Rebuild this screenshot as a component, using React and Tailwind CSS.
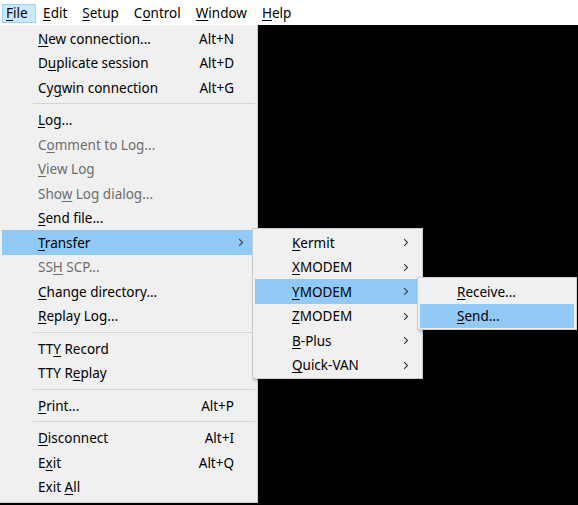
import React from "react";

const FONT = { fontFamily: '"Noto Sans", "Open Sans", sans-serif' };

function Label({ text, m }) {
  if (m === undefined || m < 0) return <span>{text}</span>;
  return (
    <span>
      {text.slice(0, m)}
      <span className="underline decoration-1 underline-offset-[2px]">{text[m]}</span>
      {text.slice(m + 1)}
    </span>
  );
}

function Chevron() {
  return (
    <svg width="6" height="9" viewBox="0 0 6 9" className="shrink-0">
      <polyline points="1.2,1.2 4.5,4.5 1.2,7.8" fill="none" stroke="#3a3a3a" strokeWidth="1.1" />
    </svg>
  );
}

function Row({ text, m, shortcut, sub, disabled, active, indent = "pl-[36px]" }) {
  return (
    <div
      className={
        "h-[24.5px] flex items-center " +
        indent +
        " " +
        (active ? "bg-[#91c9f7]" : "") +
        " " +
        (disabled ? "text-[#6d6d6d]" : "text-black")
      }
    >
      <div className="flex-1 whitespace-nowrap leading-none pt-[2px]">
        <Label text={text} m={m} />
      </div>
      {shortcut && <div className="pr-[21px] whitespace-nowrap leading-none pt-[2px]">{shortcut}</div>}
      {sub && (
        <div className="pr-[11px] flex items-center pt-[1px]">
          <Chevron />
        </div>
      )}
    </div>
  );
}

function Sep() {
  return (
    <div className="h-[8px] flex items-center pl-[31px]">
      <div className="h-px w-full bg-[#d5d5d5]" />
    </div>
  );
}

export default function App() {
  const bar = [
    ["File", 0],
    ["Edit", 0],
    ["Setup", 0],
    ["Control", 1],
    ["Window", 0],
    ["Help", 0],
  ];
  return (
    <div className="relative w-[578px] h-[505px] overflow-hidden flex flex-col text-[13.5px]" style={FONT}>
      <div className="h-[25px] bg-white flex items-start pt-[4px] pl-[2px] shrink-0">
        {bar.map(([t, m], i) => (
          <div
            key={t}
            className={
              "h-[19px] flex items-center leading-none text-black border pt-[1px] " +
              (i === 0
                ? "pl-[3px] pr-[7px] bg-[#cce8ff] border-[#99d1ff]"
                : "px-[6.5px] border-transparent")
            }
          >
            <Label text={t} m={m} />
          </div>
        ))}
      </div>
      <div className="flex-1 bg-black" />

      {/* File menu */}
      <div className="absolute left-0 top-[25px] w-[258px] h-[478px] bg-[#f0f0f0] border-r border-b border-[#cccccc] pl-[2px] pr-[2px] pt-[1px]">
        <Row text="New connection..." m={0} shortcut="Alt+N" />
        <Row text="Duplicate session" m={1} shortcut="Alt+D" />
        <Row text="Cygwin connection" m={2} shortcut="Alt+G" />
        <Sep />
        <Row text="Log..." m={0} />
        <Row text="Comment to Log..." m={1} disabled />
        <Row text="View Log" m={0} disabled />
        <Row text="Show Log dialog..." m={3} disabled />
        <Row text="Send file..." m={0} />
        <Row text="Transfer" m={0} sub active />
        <Row text="SSH SCP..." m={2} disabled />
        <Row text="Change directory..." m={0} />
        <Row text="Replay Log..." m={0} />
        <Sep />
        <Row text="TTY Record" m={2} />
        <Row text="TTY Replay" m={5} />
        <Sep />
        <Row text="Print..." m={0} shortcut="Alt+P" />
        <Sep />
        <Row text="Disconnect" m={0} shortcut="Alt+I" />
        <Row text="Exit" m={1} shortcut="Alt+Q" />
        <Row text="Exit All" m={5} />
      </div>

      {/* Transfer submenu */}
      <div className="absolute left-[252px] top-[228px] w-[171px] bg-[#f0f0f0] border border-[#cccccc] p-[1px] px-[2px] shadow-[2px_2px_3px_rgba(0,0,0,0.25)]">
        <Row text="Kermit" m={0} sub indent="pl-[37px]" />
        <Row text="XMODEM" m={0} sub indent="pl-[37px]" />
        <Row text="YMODEM" m={0} sub active indent="pl-[37px]" />
        <Row text="ZMODEM" m={0} sub indent="pl-[37px]" />
        <Row text="B-Plus" m={0} sub indent="pl-[37px]" />
        <Row text="Quick-VAN" m={0} sub indent="pl-[37px]" />
      </div>

      {/* YMODEM submenu */}
      <div className="absolute left-[417px] top-[277px] w-[160px] bg-[#f0f0f0] border border-[#cccccc] p-[1px] px-[2px] shadow-[2px_2px_3px_rgba(0,0,0,0.25)]">
        <Row text="Receive..." m={0} indent="pl-[37px]" />
        <Row text="Send..." m={0} active indent="pl-[37px]" />
      </div>
    </div>
  );
}
